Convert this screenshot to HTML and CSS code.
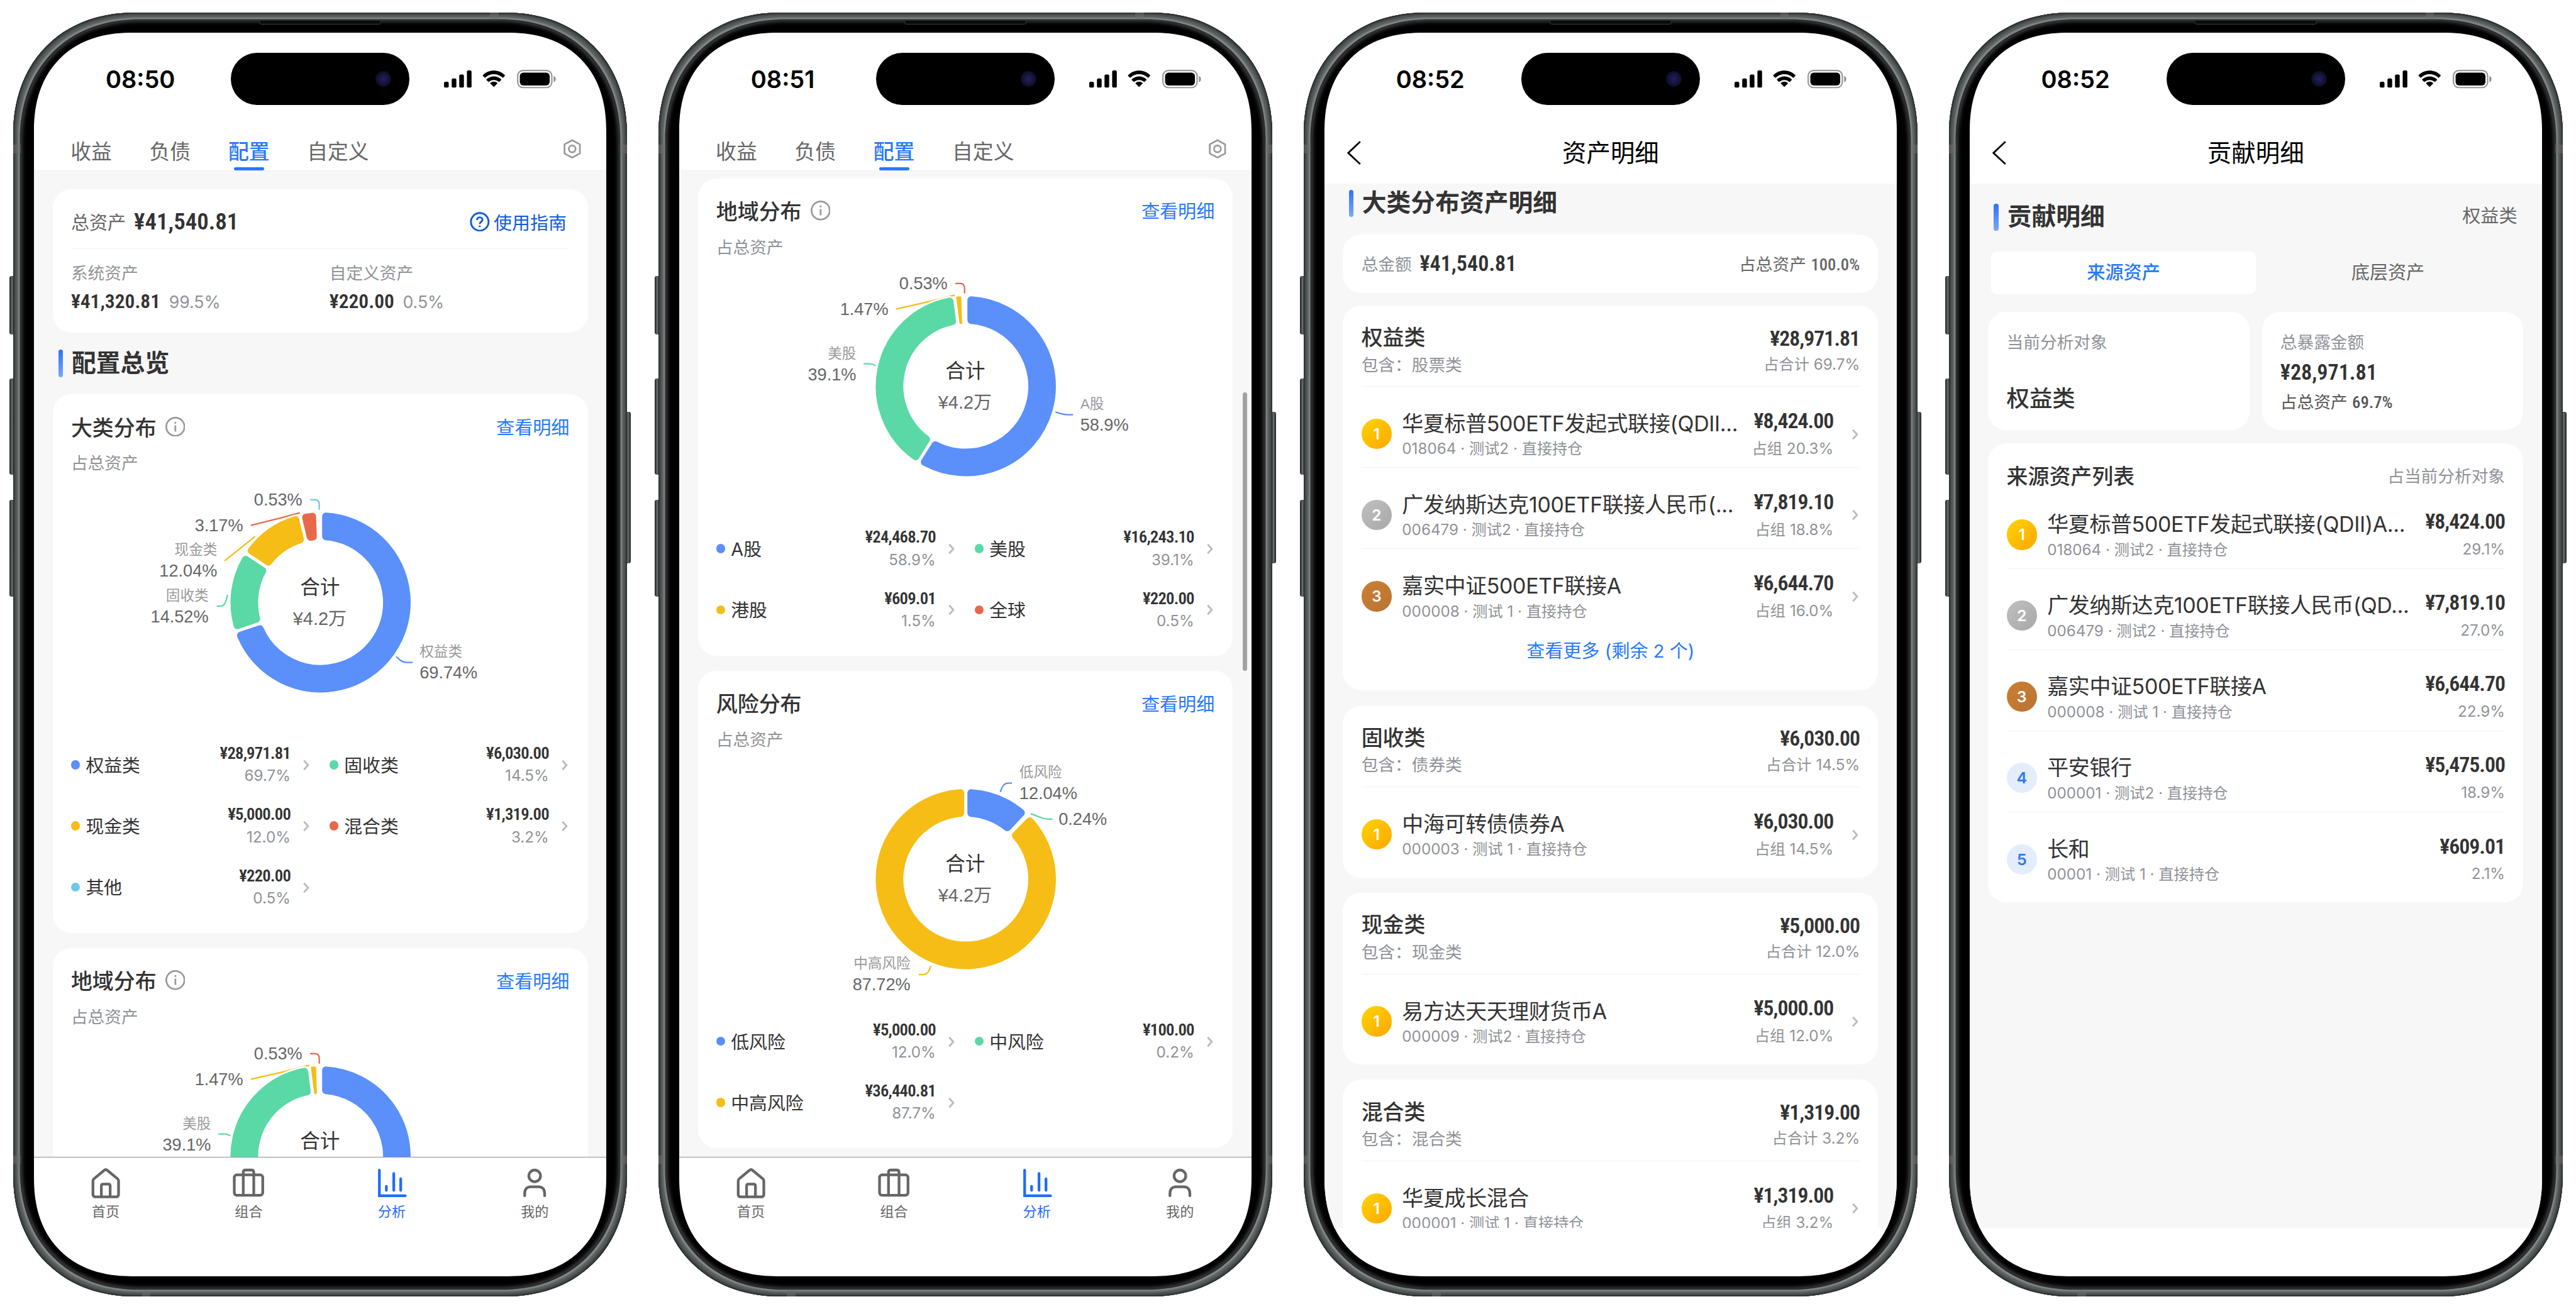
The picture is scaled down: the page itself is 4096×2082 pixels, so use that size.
FILE: index.html
```html
<!DOCTYPE html>
<html lang="zh-CN">
<head>
  <meta charset="UTF-8">
  <meta name="viewport" content="width=device-width, initial-scale=1.0">
  <title>资产配置</title>
  <link rel="stylesheet" href="styles.css">
</head>
<body>
  <svg class="symbols" aria-hidden="true">
    <symbol id="signal" viewBox="0 0 19.4 12.2">
      <rect x="0" y="8" width="3.3" height="4.2" rx="1"/>
      <rect x="5.4" y="5.6" width="3.3" height="6.6" rx="1"/>
      <rect x="10.7" y="2.9" width="3.3" height="9.3" rx="1"/>
      <rect x="16.1" y="0" width="3.3" height="12.2" rx="1"/>
    </symbol>
    <symbol id="wifi" viewBox="0 0 17 12.4">
      <path d="M8.5 2.6c2.3 0 4.5.9 6.1 2.5.1.1.3.1.4 0l1.2-1.2c.2-.2.2-.4 0-.6C12-1 5-1 .8 3.3c-.2.2-.2.4 0 .6L2 5.1c.1.1.3.1.4 0C4 3.500 6.2 2.600 8.5 2.600z"/>
      <path d="M8.5 6.7c1.3 0 2.5.5 3.4 1.3.1.1.3.1.5 0l1.2-1.2c.2-.2.2-.4 0-.6-2.900-2.700-7.300-2.700-10.200 0-.2.2-.2.4 0 .6l1.2 1.2c.1.1.3.1.5 0 .9-.8 2.100-1.300 3.400-1.300z"/>
      <path d="M10.9 9.3c.2-.2.2-.4 0-.6-1.400-1.200-3.400-1.200-4.800 0-.2.2-.2.4 0 .6l2.100 2.100c.2.2.4.2.6 0z"/>
    </symbol>
    <symbol id="battery" viewBox="0 0 27.3 13">
      <rect x=".5" y=".5" width="24" height="12" rx="3.8" fill="none" stroke="#000" stroke-opacity=".4"/>
      <rect x="2" y="2" width="21" height="9" rx="2.5"/>
      <path d="M25.8 4.3v4.4c.9-.4 1.5-1.2 1.5-2.2s-.6-1.8-1.5-2.2z" fill-opacity=".45"/>
    </symbol>
    <symbol id="gear" viewBox="0 0 14 14">
      <path d="M7 .9 12.4 3.8v6.4L7 13.1 1.6 10.2V3.8z" stroke-linejoin="round"/>
      <circle cx="7" cy="7" r="2.4"/>
    </symbol>
    <symbol id="help" viewBox="0 0 14 14">
      <circle cx="7" cy="7" r="6.2"/>
      <path d="M5.1 5.7c0-1.1.8-1.900 1.900-1.900s1.900.8 1.900 1.800c0 1.400-1.900 1.500-1.900 2.900"/>
      <path d="M7 9.6v1.1"/>
    </symbol>
    <symbol id="info" viewBox="0 0 14 14">
      <circle cx="7" cy="7" r="6.4"/>
      <path d="M7 6v4.4M7 3.5v1.2"/>
    </symbol>
    <symbol id="arrow" viewBox="0 0 5 8">
      <path d="M1 .8 3.9 4 1 7.2"/>
    </symbol>
    <symbol id="back" viewBox="0 0 10 17">
      <path d="M9.2.6.8 8.5l8.4 7.9"/>
    </symbol>
    <symbol id="home" viewBox="0 0 24 24">
      <path d="M3 10.6c0-.6.2-1 .7-1.4l7.3-6c.6-.5 1.4-.5 2 0l7.3 6c.5.4.7.8.7 1.4v9.7c0 1-.7 1.6-1.6 1.6H4.6c-.9 0-1.6-.6-1.6-1.6z"/>
      <path d="M8.9 21.5v-7.3c0-.8.5-1.2 1.2-1.2h3.8c.7 0 1.2.4 1.2 1.2v7.3"/>
    </symbol>
    <symbol id="bag" viewBox="0 0 24 24">
      <rect x="2" y="6.5" width="20" height="14.3" rx="1.8"/>
      <path d="M8.3 20.500V4.700c0-1 .6-1.600 1.600-1.600h4.200c1 0 1.600.6 1.600 1.600v15.800"/>
    </symbol>
    <symbol id="stat" viewBox="0 0 24 24">
      <path d="M3.2 3.2v18h18.2M8.1 14.5v2.9M13.3 5.5v11.9M18.2 9.2v8.2"/>
    </symbol>
    <symbol id="user" viewBox="0 0 24 24">
      <circle cx="12" cy="7.2" r="4.1"/>
      <path d="M5 21.2v-1.7c0-2.800 1.500-4.600 4.300-4.600h5.400c2.800 0 4.300 1.800 4.300 4.600v1.700"/>
    </symbol>
  </svg>

  <main class="board">

    <!-- 配置总览 -->
    <section class="phone">
      <div class="keys"><i></i><i></i><i></i><i></i></div>
      <div class="frame"></div>
      <div class="bands"><i></i><i></i><i></i><i></i><i></i><i></i></div>
      <div class="speaker"></div>
      <div class="screen">
        <div class="island"><span class="camera"></span></div>
        <div class="status">
          <span class="time">08:50</span>
          <svg class="signal"><use href="#signal"/></svg>
          <svg class="wifi"><use href="#wifi"/></svg>
          <svg class="battery"><use href="#battery"/></svg>
        </div>
        <nav class="tabs">
          <a>收益</a><a>负债</a><a class="on">配置</a><a>自定义</a>
          <svg class="gear"><use href="#gear"/></svg>
        </nav>
        <div class="content overview">
          <div class="card total">
            <div class="total-head">
              <span class="label">总资产</span><b class="num">¥41,540.81</b>
              <a class="guide"><svg><use href="#help"/></svg>使用指南</a>
            </div>
            <div class="total-split">
              <div><p>系统资产</p><b class="num">¥41,320.81</b><em>99.5%</em></div>
              <div><p>自定义资产</p><b class="num">¥220.00</b><em>0.5%</em></div>
            </div>
          </div>
          <h2 class="section-title">配置总览</h2>
          <div class="card dist">
            <div class="dist-head"><h3>大类分布</h3><svg class="info"><use href="#info"/></svg><a>查看明细</a></div>
            <p class="dist-sub">占总资产</p>
            <svg class="chart" data-chart="category"></svg>
            <div class="legend">
              <div class="cell"><i class="dot blue"></i><span>权益类</span><div><b class="num">¥28,971.81</b><em>69.7%</em></div><svg class="arrow"><use href="#arrow"/></svg></div>
              <div class="cell"><i class="dot green"></i><span>固收类</span><div><b class="num">¥6,030.00</b><em>14.5%</em></div><svg class="arrow"><use href="#arrow"/></svg></div>
              <div class="cell"><i class="dot yellow"></i><span>现金类</span><div><b class="num">¥5,000.00</b><em>12.0%</em></div><svg class="arrow"><use href="#arrow"/></svg></div>
              <div class="cell"><i class="dot red"></i><span>混合类</span><div><b class="num">¥1,319.00</b><em>3.2%</em></div><svg class="arrow"><use href="#arrow"/></svg></div>
              <div class="cell"><i class="dot sky"></i><span>其他</span><div><b class="num">¥220.00</b><em>0.5%</em></div><svg class="arrow"><use href="#arrow"/></svg></div>
            </div>
          </div>
          <div class="card dist">
            <div class="dist-head"><h3>地域分布</h3><svg class="info"><use href="#info"/></svg><a>查看明细</a></div>
            <p class="dist-sub">占总资产</p>
            <svg class="chart" data-chart="region"></svg>
          </div>
        </div>
        <nav class="tabbar">
          <a><svg><use href="#home"/></svg>首页</a>
          <a><svg><use href="#bag"/></svg>组合</a>
          <a class="on"><svg><use href="#stat"/></svg>分析</a>
          <a><svg><use href="#user"/></svg>我的</a>
        </nav>
      </div>
    </section>

    <!-- 地域 / 风险分布 -->
    <section class="phone">
      <div class="keys"><i></i><i></i><i></i><i></i></div>
      <div class="frame"></div>
      <div class="bands"><i></i><i></i><i></i><i></i><i></i><i></i></div>
      <div class="speaker"></div>
      <div class="screen">
        <div class="island"><span class="camera"></span></div>
        <div class="status">
          <span class="time">08:51</span>
          <svg class="signal"><use href="#signal"/></svg>
          <svg class="wifi"><use href="#wifi"/></svg>
          <svg class="battery"><use href="#battery"/></svg>
        </div>
        <nav class="tabs">
          <a>收益</a><a>负债</a><a class="on">配置</a><a>自定义</a>
          <svg class="gear"><use href="#gear"/></svg>
        </nav>
        <div class="content scrolled">
          <div class="card dist">
            <div class="dist-head"><h3>地域分布</h3><svg class="info"><use href="#info"/></svg><a>查看明细</a></div>
            <p class="dist-sub">占总资产</p>
            <svg class="chart" data-chart="region"></svg>
            <div class="legend">
              <div class="cell"><i class="dot blue"></i><span>A股</span><div><b class="num">¥24,468.70</b><em>58.9%</em></div><svg class="arrow"><use href="#arrow"/></svg></div>
              <div class="cell"><i class="dot green"></i><span>美股</span><div><b class="num">¥16,243.10</b><em>39.1%</em></div><svg class="arrow"><use href="#arrow"/></svg></div>
              <div class="cell"><i class="dot yellow"></i><span>港股</span><div><b class="num">¥609.01</b><em>1.5%</em></div><svg class="arrow"><use href="#arrow"/></svg></div>
              <div class="cell"><i class="dot red"></i><span>全球</span><div><b class="num">¥220.00</b><em>0.5%</em></div><svg class="arrow"><use href="#arrow"/></svg></div>
            </div>
          </div>
          <div class="card dist">
            <div class="dist-head"><h3>风险分布</h3><a>查看明细</a></div>
            <p class="dist-sub">占总资产</p>
            <svg class="chart" data-chart="risk"></svg>
            <div class="legend">
              <div class="cell"><i class="dot blue"></i><span>低风险</span><div><b class="num">¥5,000.00</b><em>12.0%</em></div><svg class="arrow"><use href="#arrow"/></svg></div>
              <div class="cell"><i class="dot green"></i><span>中风险</span><div><b class="num">¥100.00</b><em>0.2%</em></div><svg class="arrow"><use href="#arrow"/></svg></div>
              <div class="cell"><i class="dot yellow"></i><span>中高风险</span><div><b class="num">¥36,440.81</b><em>87.7%</em></div><svg class="arrow"><use href="#arrow"/></svg></div>
            </div>
          </div>
          <span class="scrollbar"></span>
        </div>
        <nav class="tabbar">
          <a><svg><use href="#home"/></svg>首页</a>
          <a><svg><use href="#bag"/></svg>组合</a>
          <a class="on"><svg><use href="#stat"/></svg>分析</a>
          <a><svg><use href="#user"/></svg>我的</a>
        </nav>
      </div>
    </section>

    <!-- 资产明细 -->
    <section class="phone">
      <div class="keys"><i></i><i></i><i></i><i></i></div>
      <div class="frame"></div>
      <div class="bands"><i></i><i></i><i></i><i></i><i></i><i></i></div>
      <div class="speaker"></div>
      <div class="screen">
        <div class="island"><span class="camera"></span></div>
        <div class="status">
          <span class="time">08:52</span>
          <svg class="signal"><use href="#signal"/></svg>
          <svg class="wifi"><use href="#wifi"/></svg>
          <svg class="battery"><use href="#battery"/></svg>
        </div>
        <div class="titlebar"><svg class="back"><use href="#back"/></svg>资产明细</div>
        <div class="content detail">
          <h2 class="section-title">大类分布资产明细</h2>
          <div class="card sum">
            <span class="label">总金额</span><b class="num">¥41,540.81</b>
            <span class="ratio">占总资产 <b class="num">100.0%</b></span>
          </div>
          <div class="card group">
            <div class="group-head">
              <div><h3>权益类</h3><p>包含：股票类</p></div>
              <div class="right"><b class="num">¥28,971.81</b><em>占合计 69.7%</em></div>
            </div>
            <div class="item"><i class="rank gold">1</i><div class="name"><strong>华夏标普500ETF发起式联接(QDII...</strong><p>018064 · 测试2 · 直接持仓</p></div><div class="right"><b class="num">¥8,424.00</b><em>占组 20.3%</em></div><svg class="arrow"><use href="#arrow"/></svg></div>
            <div class="item"><i class="rank silver">2</i><div class="name"><strong>广发纳斯达克100ETF联接人民币(...</strong><p>006479 · 测试2 · 直接持仓</p></div><div class="right"><b class="num">¥7,819.10</b><em>占组 18.8%</em></div><svg class="arrow"><use href="#arrow"/></svg></div>
            <div class="item"><i class="rank bronze">3</i><div class="name"><strong>嘉实中证500ETF联接A</strong><p>000008 · 测试 1 · 直接持仓</p></div><div class="right"><b class="num">¥6,644.70</b><em>占组 16.0%</em></div><svg class="arrow"><use href="#arrow"/></svg></div>
            <a class="more">查看更多 (剩余 2 个)</a>
          </div>
          <div class="card group">
            <div class="group-head">
              <div><h3>固收类</h3><p>包含：债券类</p></div>
              <div class="right"><b class="num">¥6,030.00</b><em>占合计 14.5%</em></div>
            </div>
            <div class="item"><i class="rank gold">1</i><div class="name"><strong>中海可转债债券A</strong><p>000003 · 测试 1 · 直接持仓</p></div><div class="right"><b class="num">¥6,030.00</b><em>占组 14.5%</em></div><svg class="arrow"><use href="#arrow"/></svg></div>
          </div>
          <div class="card group">
            <div class="group-head">
              <div><h3>现金类</h3><p>包含：现金类</p></div>
              <div class="right"><b class="num">¥5,000.00</b><em>占合计 12.0%</em></div>
            </div>
            <div class="item"><i class="rank gold">1</i><div class="name"><strong>易方达天天理财货币A</strong><p>000009 · 测试2 · 直接持仓</p></div><div class="right"><b class="num">¥5,000.00</b><em>占组 12.0%</em></div><svg class="arrow"><use href="#arrow"/></svg></div>
          </div>
          <div class="card group">
            <div class="group-head">
              <div><h3>混合类</h3><p>包含：混合类</p></div>
              <div class="right"><b class="num">¥1,319.00</b><em>占合计 3.2%</em></div>
            </div>
            <div class="item"><i class="rank gold">1</i><div class="name"><strong>华夏成长混合</strong><p>000001 · 测试 1 · 直接持仓</p></div><div class="right"><b class="num">¥1,319.00</b><em>占组 3.2%</em></div><svg class="arrow"><use href="#arrow"/></svg></div>
          </div>
        </div>
        <div class="safe-area"></div>
      </div>
    </section>

    <!-- 贡献明细 -->
    <section class="phone">
      <div class="keys"><i></i><i></i><i></i><i></i></div>
      <div class="frame"></div>
      <div class="bands"><i></i><i></i><i></i><i></i><i></i><i></i></div>
      <div class="speaker"></div>
      <div class="screen">
        <div class="island"><span class="camera"></span></div>
        <div class="status">
          <span class="time">08:52</span>
          <svg class="signal"><use href="#signal"/></svg>
          <svg class="wifi"><use href="#wifi"/></svg>
          <svg class="battery"><use href="#battery"/></svg>
        </div>
        <div class="titlebar"><svg class="back"><use href="#back"/></svg>贡献明细</div>
        <div class="content contrib">
          <h2 class="section-title">贡献明细<small>权益类</small></h2>
          <div class="switch"><a class="on">来源资产</a><a>底层资产</a></div>
          <div class="pair">
            <div class="card target"><p>当前分析对象</p><strong>权益类</strong></div>
            <div class="card exposure"><p>总暴露金额</p><b class="num">¥28,971.81</b><span>占总资产 <b class="num">69.7%</b></span></div>
          </div>
          <div class="card source">
            <div class="source-head"><h3>来源资产列表</h3><span>占当前分析对象</span></div>
            <div class="item"><i class="rank gold">1</i><div class="name"><strong>华夏标普500ETF发起式联接(QDII)A...</strong><p>018064 · 测试2 · 直接持仓</p></div><div class="right"><b class="num">¥8,424.00</b><em>29.1%</em></div></div>
            <div class="item"><i class="rank silver">2</i><div class="name"><strong>广发纳斯达克100ETF联接人民币(QD...</strong><p>006479 · 测试2 · 直接持仓</p></div><div class="right"><b class="num">¥7,819.10</b><em>27.0%</em></div></div>
            <div class="item"><i class="rank bronze">3</i><div class="name"><strong>嘉实中证500ETF联接A</strong><p>000008 · 测试 1 · 直接持仓</p></div><div class="right"><b class="num">¥6,644.70</b><em>22.9%</em></div></div>
            <div class="item"><i class="rank">4</i><div class="name"><strong>平安银行</strong><p>000001 · 测试2 · 直接持仓</p></div><div class="right"><b class="num">¥5,475.00</b><em>18.9%</em></div></div>
            <div class="item"><i class="rank">5</i><div class="name"><strong>长和</strong><p>00001 · 测试 1 · 直接持仓</p></div><div class="right"><b class="num">¥609.01</b><em>2.1%</em></div></div>
          </div>
        </div>
        <div class="safe-area"></div>
      </div>
    </section>

  </main>
  <script src="charts.js"></script>
</body>
</html>
```
FILE: styles.css
```css
* {
  box-sizing: border-box;
  margin: 0;
  padding: 0;
}
html, body {
  background: #fff;
  overflow: hidden;
}
body {
  font-family: Inter, "Noto Sans CJK SC", sans-serif;
  color: #333;
}
i, em {
  font-style: normal;
}
.symbols {
  position: absolute;
  width: 0;
  height: 0;
}
/* phones are laid out in points, the board scales them up */
.board {
  zoom: 2.263;
  width: 1810px;
  height: 920px;
  display: flex;
  gap: 3.333px;
}

/* ---------- device ---------- */
.phone {
  position: relative;
  flex: none;
  width: 450px;
  height: 920px;
  padding: 23px 24px;
}
.frame {
  position: absolute;
  inset: 8.7px 9.4px;
  border-radius: 86px;
  corner-shape: superellipse(1.12);
  background: #000;
  box-shadow:
    inset 0 0 .5px .5px #262a2a,
    inset 0 0 1.5px 1.8px #3f4444,
    inset 0 0 1px 3.6px #5c6161,
    inset 0 0 .6px 4.7px #8a8e8e,
    inset 0 0 0 5.3px #191b1b,
    inset 0 0 3px 6.2px #484848;
}
.keys i {
  position: absolute;
  left: 6.6px;
  width: 5px;
  border-radius: 1.5px 0 0 1.5px;
  background: linear-gradient(90deg, #1d2020, #6d7272 40%, #222 60%);
}
.keys i:nth-child(1) { top: 193.8px; height: 41.5px; }
.keys i:nth-child(2) { top: 265.8px; height: 67.7px; }
.keys i:nth-child(3) { top: 351.3px; height: 68px; }
.keys i:nth-child(4) {
  top: 289.3px;
  left: auto;
  right: 6.8px;
  height: 106.7px;
  border-radius: 0 1.5px 1.5px 0;
  background: linear-gradient(270deg, #1d2020, #6d7272 40%, #222 60%);
}
.bands i {
  position: absolute;
  width: 5px;
  height: 6px;
  background: rgba(110, 110, 110, .5);
}
.bands i:nth-child(1) { left: 9.4px; top: 101.8px; }
.bands i:nth-child(2) { right: 9.4px; top: 101.8px; }
.bands i:nth-child(3) { left: 9.4px; top: 812px; }
.bands i:nth-child(4) { right: 9.4px; top: 812px; }
.bands i:nth-child(5) { left: 344.3px; top: 8.7px; width: 6px; height: 5px; }
.bands i:nth-child(6) { left: 99.7px; bottom: 8.7px; width: 6px; height: 5px; }
.speaker {
  position: absolute;
  left: 182px;
  top: 14.5px;
  width: 86px;
  height: 2.7px;
  border: .4px solid #3a3a3a;
  border-top: 0;
  border-radius: 0 0 2px 2px;
  background: #0b0b0b;
}
.screen {
  position: relative;
  width: 402px;
  height: 874px;
  display: flex;
  flex-direction: column;
  overflow: hidden;
  background: #fff;
  border-radius: 69px;
  corner-shape: superellipse(1.18);
}
.island {
  position: absolute;
  left: 138.2px;
  top: 14px;
  width: 125.5px;
  height: 36.8px;
  border-radius: 19px;
  background: #000;
}
.camera {
  position: absolute;
  right: 12.8px;
  top: 12.9px;
  width: 11px;
  height: 11px;
  border-radius: 50%;
  background: radial-gradient(circle, #241f5e 0, #16133c 45%, #0b0e22 70%, #04060c 100%);
}
.status {
  flex: none;
  height: 54px;
  padding: 11.4px 35.4px 0 50.2px;
  display: flex;
  align-items: center;
  color: #000;
}
.time {
  flex: 1;
  font-size: 16.8px;
  font-weight: 600;
}
.signal { width: 19.4px; height: 12.2px; }
.wifi { width: 17px; height: 12.4px; margin-left: 7.3px; }
.battery { width: 27.3px; height: 13px; margin-left: 7.6px; }

/* ---------- navigation ---------- */
.tabs {
  flex: none;
  height: 43px;
  padding: 16.4px 16.8px 0 25.6px;
  display: flex;
  align-items: center;
  gap: 26.4px;
  font-size: 14.5px;
  color: #666;
  border-bottom: .5px solid #eee;
}
.tabs a {
  position: relative;
  height: 26.6px;
  line-height: 26.6px;
}
.tabs .on {
  color: #2878ff;
  font-weight: 500;
}
.tabs .on::after {
  content: "";
  position: absolute;
  left: 50%;
  bottom: 0;
  width: 21.2px;
  height: 2.2px;
  margin-left: -10.6px;
  border-radius: 1px;
  background: #2878ff;
}
.gear {
  width: 14px;
  height: 14px;
  margin: -3.6px 0 0 auto;
  fill: none;
  stroke: #999;
  stroke-width: 1.2;
}
.titlebar {
  position: relative;
  flex: none;
  height: 52px;
  padding-top: 5.8px;
  display: flex;
  align-items: center;
  justify-content: center;
  font-size: 17px;
  color: #000;
}
.back {
  position: absolute;
  left: 15.9px;
  top: 22.2px;
  width: 10px;
  height: 17px;
  fill: none;
  stroke: #000;
  stroke-width: 1.2;
}
.tabbar {
  flex: none;
  height: 83.9px;
  padding-top: 5.8px;
  display: flex;
  border-top: .5px solid #8e8e8e;
  font-size: 9.8px;
  line-height: 14px;
  color: #666;
}
.tabbar a {
  flex: 1;
  display: flex;
  flex-direction: column;
  align-items: center;
  gap: 1.6px;
}
.tabbar svg {
  width: 24px;
  height: 24px;
  fill: none;
  stroke: currentColor;
  stroke-width: 1.9;
  stroke-linecap: round;
}
.tabbar .on { color: #1f6bff; }
.safe-area {
  flex: none;
  height: 34px;
}

/* ---------- content ---------- */
.content {
  position: relative;
  flex: 1;
  min-height: 0;
  padding: 13.2px 13px 0;
  overflow: hidden;
  background: #f7f7f7;
}
.content.scrolled { padding-top: 5.4px; }
.content.detail { padding-top: 0; }
.content.contrib { padding-top: 2px; }
.scrollbar {
  position: absolute;
  right: 3.2px;
  top: 155.7px;
  width: 2.8px;
  height: 195.7px;
  border-radius: 2px;
  background: #a2a2a2;
}
.card {
  padding: 0 12.9px;
  border-radius: 12.9px;
  background: #fff;
}
.num {
  font-family: "Roboto Condensed", Roboto, sans-serif;
  font-stretch: 75%;
  font-weight: 600;
}
h3 {
  font-size: 15px;
  font-weight: 500;
}
.section-title {
  height: 43.6px;
  padding-left: 4px;
  display: flex;
  align-items: center;
  font-size: 17.15px;
  font-weight: 600;
  line-height: 22px;
}
.section-title::before {
  content: "";
  width: 3.2px;
  height: 19.2px;
  margin: 1.4px 6.2px 0 0;
  border-radius: 1.6px;
  background: linear-gradient(#2b73f7, #7aa8f8);
}
.section-title small {
  margin-left: auto;
  padding-right: 4.3px;
  font-size: 12.86px;
  font-weight: 400;
  color: #666;
}
.section-title {
  padding-bottom: 1.4px;
}

.total { height: 100.5px; }
.total-head {
  height: 41.6px;
  padding-top: 4px;
  display: flex;
  align-items: center;
  border-bottom: .5px solid #f2f2f2;
}
.total-head .label {
  font-size: 12.86px;
  color: #666;
}
.total-head .num {
  margin-left: 5.7px;
  font-size: 16.3px;
}
.guide {
  margin-left: auto;
  padding-right: 2px;
  display: flex;
  align-items: center;
  gap: 2.9px;
  font-size: 12.8px;
  color: #0f5ade;
}
.guide svg {
  width: 14px;
  height: 14px;
  fill: none;
  stroke: currentColor;
  stroke-width: 1.3;
}
.total-split {
  padding-top: 8px;
  display: grid;
  grid-template-columns: 1fr 1fr;
  column-gap: 12.9px;
}
.total-split p {
  font-size: 11.8px;
  line-height: 18px;
  color: #8f9298;
}
.total-split .num {
  font-size: 13.93px;
  line-height: 22.6px;
}
.total-split em {
  margin-left: 6px;
  font-size: 11.8px;
  color: #8f9298;
}

.dist { margin-bottom: 10.7px; }
.dist-head {
  height: 41.5px;
  padding-top: 3.2px;
  display: flex;
  align-items: center;
}
.dist-head a {
  margin-left: auto;
  font-size: 12.86px;
  color: #2878ff;
}
.info {
  width: 14px;
  height: 14px;
  margin: .4px 0 0 6.2px;
  fill: none;
  stroke: #999;
  stroke-width: 1.2;
}
.dist-sub {
  font-size: 11.8px;
  line-height: 14px;
  color: #8f9298;
}
.chart {
  display: block;
  width: 350.6px;
  height: 183.2px;
  overflow: visible;
  font-family: "Liberation Sans", "Noto Sans CJK SC", sans-serif;
}
.legend {
  padding-bottom: 10.8px;
  display: grid;
  grid-template-columns: 1fr 1fr;
  grid-auto-rows: 43px;
  column-gap: 12.9px;
}
.cell {
  display: flex;
  align-items: center;
}
.cell span {
  flex: 1;
  margin: -.8px 0 0 4px;
  font-size: 12.75px;
}
.cell div {
  display: flex;
  flex-direction: column;
  text-align: right;
  line-height: 15.6px;
}
.cell .num {
  font-size: 11.8px;
  letter-spacing: -.03em;
}
.cell em {
  font-size: 10.7px;
  color: #8f9298;
}
.dot {
  width: 6.4px;
  height: 6.4px;
  border-radius: 50%;
}
.blue { background: #5b8ff9; }
.green { background: #5ad8a6; }
.yellow { background: #f6bd16; }
.red { background: #e8684a; }
.sky { background: #6dc8ec; }
.arrow {
  flex: none;
  width: 5px;
  height: 8px;
  margin: .6px .8px 0 8.6px;
  fill: none;
  stroke: #b9bdc4;
  stroke-width: 1.3;
}

/* ---------- detail lists ---------- */
.detail .section-title { margin-top: -7.8px; }
.sum {
  height: 41.3px;
  margin-bottom: 8.6px;
  padding-bottom: .6px;
  display: flex;
  align-items: center;
}
.sum .label {
  font-size: 11.8px;
  color: #8f9298;
}
.sum > .num {
  margin-left: 5.6px;
  font-size: 15.1px;
}
.ratio {
  margin-left: auto;
  font-size: 11.8px;
  color: #666;
}
.ratio .num, .exposure span .num { font-weight: 500; }
.group {
  margin-bottom: 10.7px;
  padding-bottom: 6.4px;
}
.group-head {
  height: 57.3px;
  padding-top: 12.6px;
  display: flex;
  justify-content: space-between;
  border-bottom: .5px solid #f0f0f0;
}
.group-head h3 { line-height: 20px; }
.group-head p {
  font-size: 11.8px;
  line-height: 18px;
  color: #8f9298;
}
.right {
  display: flex;
  flex-direction: column;
  text-align: right;
}
.right .num {
  font-size: 15px;
  line-height: 20px;
  letter-spacing: -.03em;
}
.group-head .num { padding-top: .6px; }
.right em {
  font-size: 10.7px;
  line-height: 17px;
  color: #8f9298;
}
.item {
  height: 57px;
  padding-top: 9.2px;
  display: flex;
  align-items: center;
  border-bottom: .5px solid #f0f0f0;
}
.item .right em { padding-top: 1.2px; }
.item:last-child, .item:nth-last-child(2):has(+ .more) { border-bottom: 0; }
.rank {
  flex: none;
  width: 21.4px;
  height: 21.4px;
  margin-right: 7.2px;
  border-radius: 50%;
  background: #e4edfb;
  color: #2b78f5;
  font-size: 11px;
  font-weight: 600;
  line-height: 21.4px;
  text-align: center;
}
.gold { background: linear-gradient(135deg, #ffd500, #ffa500); color: #fff; }
.silver { background: linear-gradient(135deg, #c0c0c0, #a8a8a8); color: #fff; }
.bronze { background: linear-gradient(135deg, #cd7f32, #b87333); color: #fff; }
.name {
  flex: 1;
  min-width: 0;
  padding-top: 1.6px;
  white-space: nowrap;
}
.name strong {
  display: block;
  font-size: 15px;
  font-weight: 400;
  line-height: 20px;
  letter-spacing: -.15px;
}
.name p {
  font-size: 10.7px;
  line-height: 16px;
  color: #8f9298;
}
.item .arrow { margin-left: 12.7px; }
.more {
  display: block;
  margin: 6.2px 0 11.8px;
  font-size: 12.86px;
  line-height: 18px;
  text-align: center;
  color: #2878ff;
}

/* ---------- contribution ---------- */
.switch {
  height: 30.2px;
  margin: 2px 2.2px 12.5px;
  display: flex;
  font-size: 12.86px;
  line-height: 30.2px;
  text-align: center;
  color: #666;
}
.switch a { flex: 1; }
.switch .on {
  border-radius: 4px;
  background: #fff;
  color: #2878ff;
  font-weight: 500;
}
.pair {
  display: grid;
  grid-template-columns: 1fr 1fr;
  gap: 8.7px;
  margin-bottom: 9px;
}
.pair .card {
  height: 83.2px;
  padding-top: 12.4px;
  display: flex;
  flex-direction: column;
}
.pair p {
  font-size: 11.8px;
  line-height: 18px;
  color: #8f9298;
}
.target strong {
  margin-top: 18.6px;
  font-size: 16.08px;
  font-weight: 500;
  line-height: 24px;
}
.exposure > .num {
  margin-top: 2.4px;
  font-size: 15.1px;
  line-height: 20px;
}
.exposure span {
  margin-top: 1.6px;
  font-size: 11.8px;
  line-height: 18px;
  color: #555;
}
.source { padding-bottom: 6.4px; }
.source-head {
  height: 31.4px;
  padding-top: 13.2px;
  display: flex;
  align-items: center;
  justify-content: space-between;
}
.source-head span {
  font-size: 11.8px;
  color: #8f9298;
}
```
FILE: charts.js
```js
// donut charts, origin at the centre of the ring
const OUTER = 63.3;
const INNER = 43.9;
const GAP = 1.1;

const COLORS = {
  blue: '#5b8ff9',
  green: '#5ad8a6',
  yellow: '#f6bd16',
  red: '#e8684a',
  sky: '#6dc8ec'
};

const CHARTS = {
  category: {
    slices: [['blue', 69.74], ['green', 14.52], ['yellow', 12.04], ['red', 3.17], ['sky', 0.53]],
    lines: [
      ['sky', 'M-7.3 -72.2h3.5q2.9 0 2.9 3.5v3.5'],
      ['red', 'M-49 -54.2L-29 -59.2L-14.5 -63'],
      ['yellow', 'M-67.4 -29.2L-46 -46.5'],
      ['green', 'M-73 2.6h2.5q3.2 0 4.3 -4.5l.8 -3.5'],
      ['blue', 'M53.1 38L55.5 40.2q2.5 1.9 5 1.9h4.2']
    ],
    labels: [
      [-12.8, -72, 'end', '', '0.53%'],
      [-54.4, -54, 'end', '', '3.17%'],
      [-72.6, -36.8, 'end', '现金类', '12.04%'],
      [-78.7, -4.9, 'end', '固收类', '14.52%'],
      [69.6, 34.6, 'start', '权益类', '69.74%']
    ]
  },
  region: {
    slices: [['blue', 58.9], ['green', 39.1], ['yellow', 1.47], ['red', 0.53]],
    lines: [
      ['red', 'M-7.3 -72.2h3.5q2.9 0 2.9 3.5v3.5'],
      ['yellow', 'M-49 -54.2L-26.7 -59.3L-7.8 -64'],
      ['green', 'M-71.8 -15.7h4.2q2.5 .1 4.3 1.3'],
      ['blue', 'M62.9 18.1l3.5 1.1q2.5 .8 5 .8h4']
    ],
    labels: [
      [-12.8, -72, 'end', '', '0.53%'],
      [-54.4, -54, 'end', '', '1.47%'],
      [-77, -23, 'end', '美股', '39.1%'],
      [80.4, 12.6, 'start', 'A股', '58.9%']
    ]
  },
  risk: {
    slices: [['blue', 12.04], ['green', 0.24], ['yellow', 87.72]],
    lines: [
      ['blue', 'M24.2 -61.2l1 -2.6q1.5 -3.6 4.5 -3.6h2.7'],
      ['green', 'M45.6 -46l7 2.7q3 1.2 5.5 1.2h2.8'],
      ['yellow', 'M-24.6 60.9l-1 2.8q-1.3 3.4 -4.4 3.4h-3']
    ],
    labels: [
      [37.6, -74.8, 'start', '低风险', '12.04%'],
      [65.2, -42, 'start', '', '0.24%'],
      [-38.9, 59.5, 'end', '中高风险', '87.72%']
    ]
  }
};

function point(r, a) {
  return `${(r * Math.sin(a)).toFixed(2)} ${(-r * Math.cos(a)).toFixed(2)}`;
}

function slicePath(from, to, corner) {
  const ro = OUTER - corner;
  const ri = INNER + corner;
  const d = GAP + corner;
  const oo = Math.asin(d / ro);
  const oi = Math.asin(d / ri);
  const large = to - from > Math.PI ? 1 : 0;
  return `M${point(ro, from + oo)} A${ro} ${ro} 0 ${large} 1 ${point(ro, to - oo)} ` +
    `L${point(ri, to - oi)} A${ri} ${ri} 0 ${large} 0 ${point(ri, from + oi)} Z`;
}

function text(x, y, size, color, anchor, value) {
  return `<text x="${x}" y="${y + size * 0.33}" font-size="${size}" fill="${color}" text-anchor="${anchor}">${value}</text>`;
}

function draw(svg) {
  const chart = CHARTS[svg.dataset.chart];
  let html = '';
  chart.lines.forEach(([color, d]) => {
    html += `<path d="${d}" fill="none" stroke="${COLORS[color]}" stroke-width="1"/>`;
  });
  let halo = '';
  let ring = '';
  let angle = 0;
  chart.slices.forEach(([color, value]) => {
    const next = angle + value / 100 * Math.PI * 2;
    const room = (next - angle) * INNER / 2 - GAP;
    if (room > 0.3) {
      const corner = Math.min(2.6, room * 0.85);
      const d = slicePath(angle, next, corner);
      halo += `<path d="${d}" fill="#fff" stroke="#fff" stroke-width="${corner * 2 + 2.2}" stroke-linejoin="round"/>`;
      ring += `<path d="${d}" fill="${COLORS[color]}" stroke="${COLORS[color]}" stroke-width="${corner * 2}" stroke-linejoin="round"/>`;
    }
    angle = next;
  });
  html += halo + ring;
  chart.labels.forEach(([x, y, anchor, name, value]) => {
    if (name) {
      html += text(x, y, 10, '#999', anchor, name);
      html += text(x, y + 14.8, 12, '#666', anchor, value);
    } else {
      html += text(x, y, 12, '#666', anchor, value);
    }
  });
  html += text(-0.4, -10.5, 14, '#333', 'middle', '合计');
  html += text(-0.6, 11.6, 12.8, '#666', 'middle', '¥4.2万');
  svg.setAttribute('viewBox', '-175.3 -90.7 350.6 183.2');
  svg.innerHTML = html;
}

document.querySelectorAll('.chart').forEach(draw);
```
